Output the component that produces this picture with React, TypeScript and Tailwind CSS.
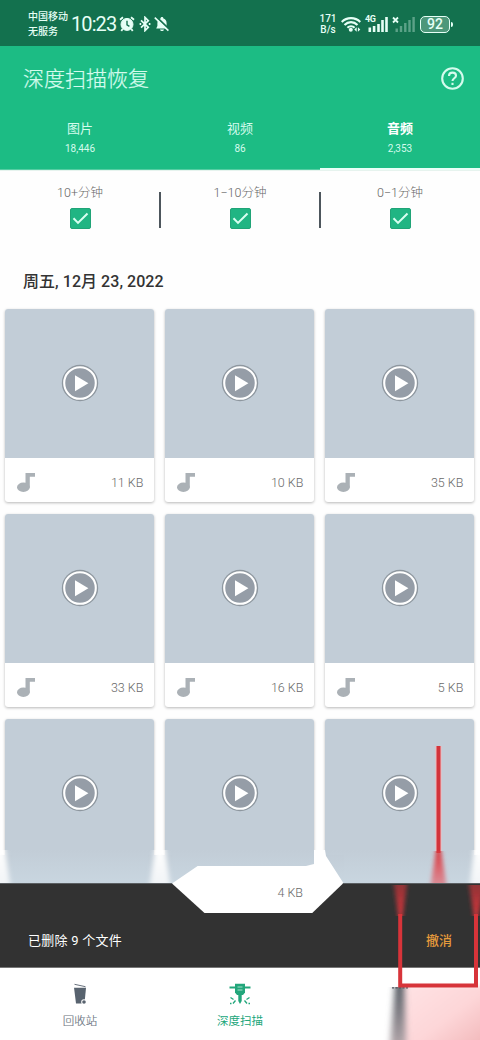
import React from 'react';

const tabs = [
    { label: '图片', count: '18,446' },
    { label: '视频', count: '86' },
    { label: '音频', count: '2,353', active: true },
];

const filters = ['10+分钟', '1−10分钟', '0−1分钟'];

const files = ['11 KB', '10 KB', '35 KB', '33 KB', '16 KB', '5 KB', '', '', ''];

function StatusBar() {
    return (
        <div className="h-[46px] shrink-0 bg-[#13714e] text-[#e6fff6] flex items-center justify-between pl-[28px] pr-[27px]">
            <div className="flex items-center">
                <div className="text-[10px] leading-[15px] w-[43px] font-medium whitespace-nowrap mt-px">
                    <div>中国移动</div>
                    <div>无服务</div>
                </div>
                <span className="text-[20px] leading-6 w-[46px] whitespace-nowrap tracking-[-0.9px] mt-0.5">10:23</span>
                <svg className="w-4 h-4 ml-[2px] mt-0.5" viewBox="0 0 16 16" fill="none" stroke="currentColor">
                    <circle cx="8" cy="8.4" r="6" fill="currentColor" />
                    <path d="M1 3.8 4 1.2M15 3.8 12 1.2M3.6 13 2.3 15M12.4 13l1.3 2" strokeWidth="1.8" />
                    <path d="M8 4.8v4l2.4 1.5" stroke="#13714e" strokeWidth="1.4" />
                </svg>
                <svg className="w-[12px] h-4 ml-[4px] mt-0.5" viewBox="0 0 12 16" fill="none" stroke="currentColor" strokeWidth="1.7">
                    <path d="m2 4.3 7.3 7L6 14.6V1.4l3.3 3.3L2 11.7" />
                    <path d="M.6 8h1.6M9.8 8h1.6" strokeWidth="1.8" />
                </svg>
                <svg className="w-4 h-4 ml-[3px] mt-0.5" viewBox="0 0 16 16">
                    <path d="M2.2 12.4 3.4 10V7c0-2.6 1.4-4.1 3.2-4.6C6.7.6 9.3.6 9.4 2.4c1.8.5 3.2 2 3.2 4.6v3l1.2 2.4z" fill="currentColor" />
                    <path d="M6 13.4h4c-.5 2.2-3.5 2.2-4 0z" fill="currentColor" />
                    <path d="m2 .6 13.4 13" stroke="#13714e" strokeWidth="2" />
                    <path d="m.8 1.6 13.6 13" stroke="currentColor" strokeWidth="1.6" />
                </svg>
            </div>
            <div className="flex items-center">
                <div className="flex flex-col gap-[2px] text-[10px] leading-[9px] w-[18px] font-medium items-center font-[Roboto] mt-0.5 mr-[4px] whitespace-nowrap">
                    <div>171</div>
                    <div>B/s</div>
                </div>
                <svg className="w-[20px] h-[16px] mt-0.5" viewBox="0 0 20 16" fill="none" stroke="currentColor" strokeWidth="2.1">
                    <path d="M.7 6c5-5.2 13.6-5.2 18.6 0M3.5 9c3.7-3.8 9.3-3.8 13 0M6.4 11.8c2-2.1 5.2-2.1 7.2 0" />
                    <circle cx="9.8" cy="13.7" r="2" fill="currentColor" stroke="none" />
                    <path d="m15.7 11.2-2.4 2.3 2.4 2.3zM16.9 11.2l2.4 2.3-2.4 2.3z" fill="currentColor" stroke="none" />
                </svg>
                <div className="relative ml-[7px] mt-0.5">
                    <span className="absolute -left-[3px] -top-px text-[9px] leading-[9px] font-bold font-[Roboto] tracking-[-0.3px]">4G</span>
                    <svg className="w-[20px] h-4" viewBox="0 0 20 16" fill="currentColor">
                        <path d="M.5 11.5h2.6V16H.5zM4.8 10h2.6v6H4.8zM9.2 8h2.6v8H9.2zM13.2 4h2.6v12h-2.6zM17.2 1h2.6v15h-2.6z" />
                    </svg>
                </div>
                <div className="relative ml-[7px] mt-0.5">
                    <svg className="w-[20px] h-4" viewBox="0 0 20 16" fill="currentColor">
                        <path d="M.5 12.5h2.4V16H.5zM4.8 10h2.4v6H4.8zM9.1 7h2.4v9H9.1zM13.3 4h2.4v12h-2.4zM17.4 1h2.4v15h-2.4z" opacity=".35" />
                    </svg>
                    <svg className="absolute -left-[3px] top-0 w-[7px] h-[8px]" viewBox="0 0 7 8" stroke="currentColor" strokeWidth="1.8">
                        <path d="m1 1.5 5 5M6 1.5l-5 5" />
                    </svg>
                </div>
                <div className="flex items-center ml-[5px] mt-0.5">
                    <div className="w-[30px] h-[17px] rounded-[5px] border-[1.5px] border-current bg-[#4d977a] text-[14px] leading-[15px] font-medium text-center font-[Roboto]">
                        92
                    </div>
                    <div className="w-[2px] h-[5px] bg-current rounded-r ml-px" />
                </div>
            </div>
        </div>
    );
}

function Header() {
    return (
        <header className="h-[124px] shrink-0 bg-[#1cbc84] text-[#d4fbed] flex flex-col">
            <div className="flex items-center justify-between h-[64px] pl-[23px] pr-[16px]">
                <h1 className="text-[21px] leading-8 font-light whitespace-nowrap mt-[2px] [-webkit-text-stroke:0.25px_currentColor]">深度扫描恢复</h1>
                <svg className="w-[23px] h-[23px]" viewBox="0 0 23 23" fill="none" stroke="currentColor" strokeWidth="2.1">
                    <circle cx="11.5" cy="11.5" r="10.3" />
                    <path d="M8 9c0-2.1 1.4-3.4 3.5-3.4S15 6.9 15 8.7c0 2.5-3.5 2.7-3.5 5.3" />
                    <path d="M11.5 15.8V18" />
                </svg>
            </div>
            <div className="grid grid-cols-3 flex-1">
                {tabs.map((tab) => (
                    <div
                        key={tab.label}
                        className={
                            tab.active
                                ? 'flex flex-col items-center pt-[10px] text-white border-b-2 border-[#eafff8]'
                                : 'flex flex-col items-center pt-[10px] border-b border-[#55cda3]'
                        }
                    >
                        <span className={tab.active ? 'text-[13px] leading-[18px] font-bold' : 'text-[13px] leading-[18px]'}>
                            {tab.label}
                        </span>
                        <span className="text-[10px] leading-[14px] mt-1 text-[#d4fbed]">{tab.count}</span>
                    </div>
                ))}
            </div>
        </header>
    );
}

function Filters() {
    return (
        <div className="grid grid-cols-3 h-[79px] shrink-0 pt-[13px] border-t border-[#e6f3ee]">
            {filters.map((label, i) => (
                <div key={label} className="relative flex flex-col items-center text-[#666]">
                    <span className="text-[12.5px] leading-[18px] font-light">{label}</span>
                    <div className="w-[21px] h-[21px] mt-[6px] rounded-[2px] bg-[#20b583] border border-[#20a477]">
                        <svg className="w-full h-full" viewBox="0 0 19 19" fill="none" stroke="#d9fff2" strokeWidth="2">
                            <path d="m2.5 9.3 4.5 4.6L16.5 4.5" />
                        </svg>
                    </div>
                    {i > 0 && <div className="absolute -left-px top-[8px] w-[1.5px] h-[36px] bg-[#4d565c]" />}
                </div>
            ))}
        </div>
    );
}

function FileCard({ size }: { size: string }) {
    return (
        <div className="rounded-[3px] overflow-hidden bg-white shadow-[0_1px_3px_rgba(0,0,0,0.28)]">
            <div className="h-[148.5px] bg-[#c2cdd7] flex items-center justify-center">
                <svg className="w-[38px] h-[38px]" viewBox="0 0 38 38">
                    <circle cx="19" cy="19" r="18.2" fill="#8e979f" />
                    <circle cx="19" cy="19" r="15.8" fill="#959da7" stroke="#fff" strokeWidth="2.1" />
                    <path d="M14 11.2v16l13.4-8z" fill="#fff" />
                </svg>
            </div>
            <div className="h-[44.5px] flex items-center justify-between pl-[12px] pr-[11px] pt-[7px]">
                <svg className="w-[18px] h-[19px] -mt-px" viewBox="0 0 18 19" fill="#abb1b6">
                    <path d="M8.5 0H18v3.7h-5.2V14H8.5z" />
                    <ellipse cx="6.4" cy="14.3" rx="6.4" ry="4.7" />
                </svg>
                <span className="text-[12.5px] leading-4 font-light text-[#6a6a6a]">{size}</span>
            </div>
        </div>
    );
}

// stretched gaps between the thumbnails right above the snackbar
function ThumbnailFade() {
    return (
        <svg className="absolute left-0 top-[541px] w-[480px] h-[34px]" viewBox="0 0 480 34">
            <defs>
                <linearGradient id="thumbs" x1="0" y1="0" x2="0" y2="1">
                    <stop offset="0" stopColor="#c2cdd7" />
                    <stop offset="1" stopColor="#c9d6e0" />
                </linearGradient>
                <linearGradient id="gap" x1="0" y1="0" x2="0" y2="1">
                    <stop offset="0" stopColor="#fff" />
                    <stop offset="1" stopColor="#fff" stopOpacity=".75" />
                </linearGradient>
                <filter id="gapBlur" x="-60%" y="-5%" width="220%" height="110%">
                    <feGaussianBlur stdDeviation="2.4 .2" />
                </filter>
                <filter id="edgeBlur">
                    <feGaussianBlur stdDeviation=".7" />
                </filter>
            </defs>
            <path d="M5 0h149v34H5zM165 0h149v34H165zM325 0h149v34H325z" fill="url(#thumbs)" />
            <path d="M0 5h12v29H0zM148 5h24v29H148zM314 5h30v29H314zM468 5h12v29H468z" fill="url(#thumbs)" />
            <path d="M-8 0H5l5 34H-8zM155 0h10l5 34H150zM474 0h14v34H470z" fill="url(#gap)" filter="url(#gapBlur)" />
            <path d="M314 0h11l1 6 18 28h-35l-3-18 8-2z" fill="#fff" filter="url(#edgeBlur)" />
        </svg>
    );
}

function Snackbar() {
    return (
        <div className="relative h-[84px] shrink-0 bg-[#323232] border-t border-[#5b5f62] flex items-end justify-between px-[28px] pb-[16px] text-[13px] leading-[20px]">
            <span className="text-white tracking-[0.25px]">已删除 9 个文件</span>
            <span className="text-[#e59a3c] font-medium">撤消</span>
            {/* exposed footer of the middle card */}
            <div className="absolute left-[172px] -top-[18px] w-[171px] h-[47px] flex items-center justify-end pr-[40px] pt-[6px] bg-white [clip-path:polygon(15%_0,86%_0,100%_37%,82%_100%,19%_100%,0_37%)]">
                <span className="text-[12.5px] leading-4 font-light text-[#6a6a6a]">4 KB</span>
            </div>
        </div>
    );
}

function BottomNav() {
    return (
        <nav className="grid grid-cols-3 h-[73px] shrink-0 bg-white text-[11.5px] leading-4 border-t border-[#777]">
            <div className="flex flex-col items-center pt-[15px] text-[#68717d]">
                <svg className="w-[16px] h-[22px]" viewBox="0 0 16 22">
                    <path d="m2.5 1.3 11 2.4" stroke="#68717d" strokeWidth="1" />
                    <path d="M2 4.8h12l-1.5 15.7H4z" fill="#58636f" />
                    <circle cx="12" cy="19" r="2.8" fill="#fff" />
                    <circle cx="12" cy="19" r="1.8" fill="#58636f" />
                </svg>
                <span className="mt-[8px] font-light [-webkit-text-stroke:0.15px_currentColor]">回收站</span>
            </div>
            <div className="flex flex-col items-center pt-[15px] text-[#22a67b]">
                <svg className="w-[22px] h-[22px]" viewBox="0 0 22 22" fill="none" stroke="currentColor">
                    <path d="M.5 4.5h21" strokeWidth="2" />
                    <path d="M6 .8h10v8.7L14 12H8L6 9.5z" fill="currentColor" stroke="none" />
                    <path d="M8.5 4h5M8.5 7h5" stroke="#a5e0cb" strokeWidth="1" />
                    <path d="M9.3 11h3.4v7L11 21l-1.7-3z" fill="currentColor" stroke="none" />
                    <path d="m1.5 14.5 3 2M4 20.5l2.5-3M1 20.5h1.5M20.5 14.5l-3 2M18 20.5l-2.5-3M21 20.5h-1.5" strokeWidth="1.3" />
                </svg>
                <span className="mt-[8px]">深度扫描</span>
            </div>
            <div className="relative overflow-hidden">
                <div className="absolute left-[79px] top-[18px] w-[90px] h-[70px] bg-linear-to-br from-[#ffe3e5] via-[#fdd6d8] to-[#eeb0b2] blur-[2px]" />
                <svg className="absolute left-[60px] top-[19px] w-[40px] h-[53px]" viewBox="0 0 40 53">
                    <defs>
                        <linearGradient id="smear" x1="0" y1="0" x2="0" y2="1">
                            <stop offset="0" stopColor="#535b63" />
                            <stop offset="1" stopColor="#b7a9ad" />
                        </linearGradient>
                        <filter id="smearBlur" x="-80%" y="-10%" width="260%" height="120%">
                            <feGaussianBlur stdDeviation="3 .5" />
                        </filter>
                    </defs>
                    <path d="M15 0h9l2 60H10z" fill="url(#smear)" filter="url(#smearBlur)" />
                    <path d="M12 .8h16" stroke="#4c555e" strokeWidth="1.2" strokeDasharray="2 1.5" />
                </svg>
            </div>
        </nav>
    );
}

// hand drawn marker pointing at the undo button
function Marker() {
    return (
        <svg className="absolute left-[385px] top-[740px] w-[95px] h-[255px]" viewBox="0 0 95 255" fill="none">
            <defs>
                <linearGradient id="fadeDown" x1="0" y1="0" x2="0" y2="1">
                    <stop offset="0" stopColor="#d9363c" />
                    <stop offset="1" stopColor="#e0707a" stopOpacity=".75" />
                </linearGradient>
                <linearGradient id="fadeUp" x1="0" y1="1" x2="0" y2="0">
                    <stop offset="0" stopColor="#d9363c" />
                    <stop offset="1" stopColor="#b03438" stopOpacity=".75" />
                </linearGradient>
                <filter id="soft" x="-80%" y="-5%" width="260%" height="110%">
                    <feGaussianBlur stdDeviation="2.3 .2" />
                </filter>
            </defs>
            <path d="M53.5 6v105" stroke="#f2b9bd" strokeWidth="6" />
            <path d="M53.5 6v107" stroke="#d2343b" strokeWidth="4" />
            <path d="M51 111h5l5 32H46z" fill="url(#fadeDown)" filter="url(#soft)" />
            <path d="M9 145h13l-4.500 31h-4z" fill="url(#fadeUp)" filter="url(#soft)" />
            <path d="M84 145h16l-7 31h-4z" fill="url(#fadeUp)" filter="url(#soft)" />
            <path d="M15.2 174v71.5H91V174" stroke="#d7343a" strokeWidth="4" />
        </svg>
    );
}

export default function App() {
    return (
        <div className="relative w-[480px] h-[1040px] overflow-hidden bg-white flex flex-col font-[Roboto,'Noto_Sans_CJK_SC',sans-serif]">
            <StatusBar />
            <Header />
            <main className="h-[713px] shrink-0 overflow-hidden flex flex-col bg-[#fefefe]">
                <Filters />
                <h2 className="h-[60px] shrink-0 pt-[22px] pl-[23px] text-[16px] leading-[22px] font-medium tracking-[0.05px] text-[#333]">
                    周五, 12月 23, 2022
                </h2>
                <div className="relative shrink-0">
                    <div className="grid grid-cols-[149px_149px_149px] gap-x-[11px] gap-y-[12px] pl-[5.4px]">
                        {files.map((size, i) => (
                            <FileCard key={i} size={size} />
                        ))}
                    </div>
                    <ThumbnailFade />
                </div>
            </main>
            <Snackbar />
            <BottomNav />
            <Marker />
        </div>
    );
}
